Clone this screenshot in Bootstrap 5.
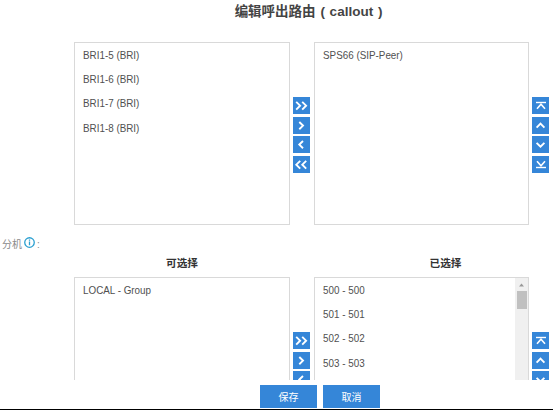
<!DOCTYPE html>
<html lang="zh-CN">
<head>
<meta charset="utf-8">
<meta name="viewport" content="width=device-width, initial-scale=1">
<title>编辑呼出路由</title>
<link href="https://cdn.jsdelivr.net/npm/bootstrap@5.3.0/dist/css/bootstrap.min.css" rel="stylesheet">
<style>
body{height:410px;font:12px/24.2px "Liberation Sans","Noto Sans CJK SC",sans-serif;color:#505050;background:#fff;border-bottom:1px solid #000}
.dialog-title{height:42px;padding-left:64px;padding-top:3px;font-size:13.5px;line-height:17px;color:#444;word-spacing:1px}
.form-view{height:380px}
.picker{display:grid;grid-template-columns:216px 24px 215px 24px;margin-left:74px;flex:none}
.picker-list{height:183px;border:1px solid #d9d9d9;padding:0 8.4px;font-size:11px}
.picker-list ul{transform:scaleX(.895);transform-origin:0 0;white-space:nowrap}
.picker-heads{height:28px;line-height:29px;font-size:10.7px;color:#333}
.move-col{gap:2.65px;padding:55px 0 0 3px}
.move-btn{width:17px;height:17px;background:#3586d8;border:0;border-radius:0;padding:0;display:block;flex:none}
.move-btn svg{display:block;width:17px;height:17px;fill:none;stroke:#fff;stroke-width:1.9}
.field-label{height:24px;padding-left:2px;font-size:10px;line-height:26px;color:#8a8a8a;margin-top:7px;margin-bottom:-7px;gap:2px}
.field-label svg{margin-top:5px}
.scroll-track{width:13px;background:#f0f0f0}
.scroll-track i{display:block;width:10px;height:18px;background:#c0c0c0}
.scroll-track svg{width:13px;height:13px;display:block}
.action-bar{height:29px;gap:6px;padding:5px 0 0 260px}
.btn-act,.btn-act:hover{width:57px;height:23px;padding:0;border:0;border-radius:0;background:#3586d8;color:#fff;font:10px/22px "Noto Sans CJK SC",sans-serif}
</style>
<script src="https://cdn.jsdelivr.net/npm/bootstrap@5.3.0/dist/js/bootstrap.bundle.min.js"></script>
</head>
<body class="overflow-hidden d-flex flex-column">
<svg class="d-none">
<symbol id="rr" viewBox="0 0 17 17"><path d="M3.2 4.800l3.900 3.900-3.900 3.900M9.200 4.800l3.900 3.900-3.900 3.900"/></symbol>
<symbol id="r" viewBox="0 0 17 17"><path d="M6.300 5l3.700 3.600-3.700 3.600"/></symbol>
<symbol id="l" viewBox="0 0 17 17"><path d="M10 5L6.300 8.600 10 12.200"/></symbol>
<symbol id="ll" viewBox="0 0 17 17"><path d="M7.200 4.800L3.300 8.700l3.900 3.900M13.200 4.800L9.300 8.700l3.900 3.900"/></symbol>
<symbol id="top" viewBox="0 0 17 17"><path stroke-width="1.400" d="M4 5.500h10"/><path stroke-width="1.600" d="M5 11.800L9 7.300l4 4.500"/></symbol>
<symbol id="u" viewBox="0 0 17 17"><path d="M4.600 10.600l3.900-3.900 3.900 3.900"/></symbol>
<symbol id="d" viewBox="0 0 17 17"><path d="M4.600 6.800l3.900 3.900 3.900-3.900"/></symbol>
<symbol id="bot" viewBox="0 0 17 17"><path stroke-width="1.400" d="M4 11.500h10"/><path stroke-width="1.600" d="M5 5.200l4 4.500 4-4.500"/></symbol>
</svg>
<div class="form-view overflow-hidden flex-shrink-0">
<h1 class="dialog-title text-center fw-bold mb-0">编辑呼出路由 ( callout )</h1>
<div class="picker">
<div class="picker-list"><ul class="list-unstyled mb-0"><li>BRI1-5 (BRI)</li><li>BRI1-6 (BRI)</li><li>BRI1-7 (BRI)</li><li>BRI1-8 (BRI)</li></ul></div>
<div class="move-col d-flex flex-column"><button class="move-btn"><svg><use href="#rr"/></svg></button><button class="move-btn"><svg><use href="#r"/></svg></button><button class="move-btn"><svg><use href="#l"/></svg></button><button class="move-btn"><svg><use href="#ll"/></svg></button></div>
<div class="picker-list"><ul class="list-unstyled mb-0"><li>SPS66 (SIP-Peer)</li></ul></div>
<div class="move-col d-flex flex-column"><button class="move-btn"><svg><use href="#top"/></svg></button><button class="move-btn"><svg><use href="#u"/></svg></button><button class="move-btn"><svg><use href="#d"/></svg></button><button class="move-btn"><svg><use href="#bot"/></svg></button></div>
</div>
<div class="field-label d-flex"><span>分机</span><svg width="11" height="11" viewBox="0 0 12 12" fill="none" stroke="#2a9fd0" stroke-width="1.4"><circle cx="6" cy="6" r="5.200"/><path d="M6 5v4M6 2.800v1.200"/></svg><span>:</span></div>
<div class="picker picker-heads fw-bold text-center"><span>可选择</span><span></span><span class="ps-5">已选择</span></div>
<div class="picker">
<div class="picker-list"><ul class="list-unstyled mb-0"><li>LOCAL - Group</li></ul></div>
<div class="move-col d-flex flex-column"><button class="move-btn"><svg><use href="#rr"/></svg></button><button class="move-btn"><svg><use href="#r"/></svg></button><button class="move-btn"><svg><use href="#l"/></svg></button></div>
<div class="picker-list d-flex justify-content-between pe-0"><ul class="list-unstyled mb-0"><li>500 - 500</li><li>501 - 501</li><li>502 - 502</li><li>503 - 503</li></ul><div class="scroll-track d-flex flex-column align-items-center"><svg viewBox="0 0 13 13"><path d="M4 8.500L6.500 5.500 9 8.500z" fill="#999"/></svg><i></i></div></div>
<div class="move-col d-flex flex-column"><button class="move-btn"><svg><use href="#top"/></svg></button><button class="move-btn"><svg><use href="#u"/></svg></button><button class="move-btn"><svg><use href="#d"/></svg></button></div>
</div>
</div>
<div class="action-bar d-flex flex-shrink-0"><button class="btn btn-act">保存</button><button class="btn btn-act">取消</button></div>
</body>
</html>
